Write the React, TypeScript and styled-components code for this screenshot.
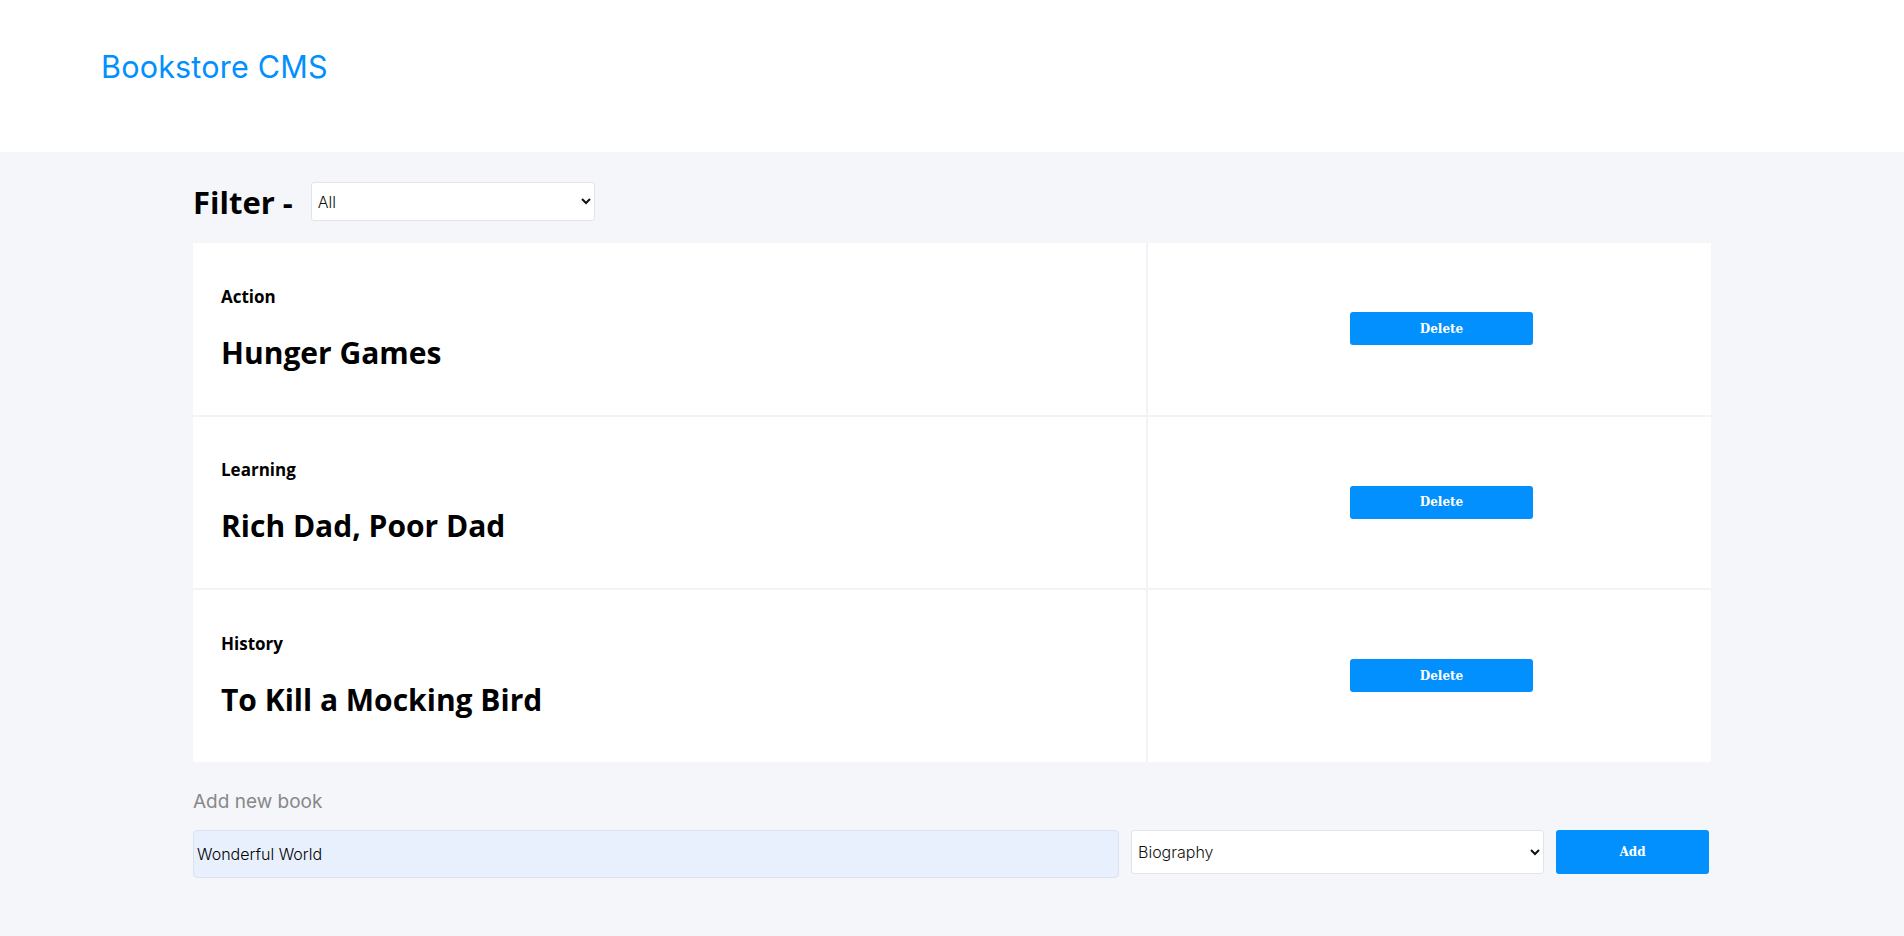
import React from "react";
import styled, { createGlobalStyle } from "styled-components";

const GlobalStyle = createGlobalStyle`
  html, body {
    margin: 0;
    padding: 0;
    background: #f5f6fa;
  }
  * { box-sizing: border-box; }
`;

const Page = styled.div`
  min-height: 936px;
  background: #f5f6fa;
`;

const Header = styled.header`
  height: 152px;
  background: #ffffff;
  padding: 48px 101px 0;
`;

const Brand = styled.h1`
  margin: 0;
  font-family: "Inter", "Open Sans", sans-serif;
  font-weight: 400;
  font-size: 30.5px;
  line-height: 38px;
  color: #0290ff;
  letter-spacing: 0.2px;
`;

const Main = styled.main`
  width: 1518px;
  margin: 0 auto;
  padding-top: 30px;
`;

const FilterBar = styled.div`
  display: flex;
  align-items: center;
  gap: 18px;
  height: 39px;
`;

const FilterLabel = styled.h2`
  margin: 0;
  font-family: "Open Sans", sans-serif;
  font-weight: 700;
  font-size: 31px;
  line-height: 39px;
  color: #000;
  padding-top: 2px;
`;

const Select = styled.select<{ $w: number; $h: number }>`
  width: ${(p) => p.$w}px;
  height: ${(p) => p.$h}px;
  background: #ffffff;
  border: 1px solid #e2e4ea;
  border-radius: 3px;
  font-family: "Inter", "Open Sans", sans-serif;
  font-size: 16px;
  font-weight: 300;
  color: #111;
  padding: 0 2px;
  outline: none;
`;

const Card = styled.section`
  margin-top: 22px;
  display: grid;
  grid-template-rows: repeat(3, 171.5px);
  row-gap: 2px;
  background: #f2f3f7;
`;

const Row = styled.article`
  display: grid;
  grid-template-columns: 953px 1fr;
  column-gap: 2px;
  background: #f2f3f7;
`;

const Info = styled.div`
  background: #fff;
  display: flex;
  flex-direction: column;
  justify-content: center;
  gap: 24px;
  padding-left: 28px;
`;

const Category = styled.span`
  font-family: "Open Sans", sans-serif;
  font-weight: 700;
  font-size: 17px;
  line-height: 24px;
  color: #000;
`;

const Title = styled.h3`
  margin: 0;
  font-family: "Open Sans", sans-serif;
  font-weight: 700;
  font-size: 30px;
  line-height: 40px;
  color: #000;
`;

const Actions = styled.div`
  background: #fff;
  display: flex;
  align-items: center;
  justify-content: center;
  padding-left: 24px;
`;

const BlueButton = styled.button<{ $w: number; $h: number }>`
  width: ${(p) => p.$w}px;
  height: ${(p) => p.$h}px;
  background: #0290ff;
  color: #fff;
  border: none;
  border-radius: 3px;
  font-family: "DejaVu Serif", serif;
  font-size: 12px;
  font-weight: 600;
  cursor: pointer;
  padding: 0;
`;

const AddTitle = styled.h4`
  margin: 28px 0 16px;
  font-family: "Inter", "Open Sans", sans-serif;
  font-weight: 400;
  font-size: 19px;
  line-height: 24px;
  color: #888;
`;

const Form = styled.form`
  display: flex;
  align-items: flex-start;
  gap: 12px;
`;

const TextInput = styled.input`
  width: 926px;
  height: 48px;
  background: #e8f0fe;
  border: 1px solid #dde3ee;
  border-radius: 4px;
  font-family: "Inter", "Open Sans", sans-serif;
  font-size: 16px;
  font-weight: 300;
  color: #000;
  padding: 0 3px;
  outline: none;
`;

const books = [
  { id: 1, category: "Action", title: "Hunger Games" },
  { id: 2, category: "Learning", title: "Rich Dad, Poor Dad" },
  { id: 3, category: "History", title: "To Kill a Mocking Bird" },
];

export default function App() {
  return (
    <Page>
      <GlobalStyle />
      <Header>
        <Brand>Bookstore CMS</Brand>
      </Header>
      <Main>
        <FilterBar>
          <FilterLabel>Filter -</FilterLabel>
          <Select $w={284} $h={39} defaultValue="All">
            <option>All</option>
            <option>Action</option>
            <option>Biography</option>
            <option>History</option>
            <option>Horror</option>
            <option>Kids</option>
            <option>Learning</option>
            <option>Sci-Fi</option>
          </Select>
        </FilterBar>
        <Card>
          {books.map((b) => (
            <Row key={b.id}>
              <Info>
                <Category>{b.category}</Category>
                <Title>{b.title}</Title>
              </Info>
              <Actions>
                <BlueButton type="button" $w={183} $h={33}>
                  Delete
                </BlueButton>
              </Actions>
            </Row>
          ))}
        </Card>
        <AddTitle>Add new book</AddTitle>
        <Form onSubmit={(e) => e.preventDefault()}>
          <TextInput defaultValue="Wonderful World" />
          <Select $w={413} $h={44} defaultValue="Biography">
            <option>Action</option>
            <option>Biography</option>
            <option>History</option>
            <option>Horror</option>
            <option>Kids</option>
            <option>Learning</option>
            <option>Sci-Fi</option>
          </Select>
          <BlueButton type="submit" $w={153} $h={44}>
            Add
          </BlueButton>
        </Form>
      </Main>
    </Page>
  );
}
